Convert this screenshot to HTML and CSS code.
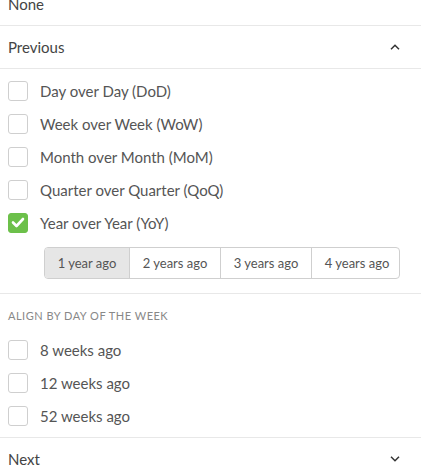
FILE: index.html
```html
<!DOCTYPE html>
<html>
<head>
<meta charset="utf-8">
<link rel="stylesheet" href="styles.css">
</head>
<body>
<div class="panel">
  <div class="header">None</div>
  <div class="header">
    <span>Previous</span>
    <svg class="chev" width="10" height="6" viewBox="0 0 10 6"><path d="M1 5.2 L5 1.2 L9 5.2" fill="none" stroke="#333" stroke-width="1.5"/></svg>
  </div>
  <div class="section first">
    <label class="row"><span class="box"></span>Day over Day (DoD)</label>
    <label class="row"><span class="box"></span>Week over Week (WoW)</label>
    <label class="row"><span class="box"></span>Month over Month (MoM)</label>
    <label class="row"><span class="box"></span>Quarter over Quarter (QoQ)</label>
    <label class="row"><span class="box checked"><svg width="14" height="11" viewBox="0 0 14 11"><path d="M2 5.5 L5.5 9 L12 2" fill="none" stroke="#fff" stroke-width="2.6" stroke-linecap="round" stroke-linejoin="round"/></svg></span>Year over Year (YoY)</label>
    <div class="seg">
      <span class="btn active">1 year ago</span>
      <span class="btn">2 years ago</span>
      <span class="btn">3 years ago</span>
      <span class="btn">4 years ago</span>
    </div>
  </div>
  <div class="section second">
    <div class="caption">ALIGN BY DAY OF THE WEEK</div>
    <label class="row"><span class="box"></span>8 weeks ago</label>
    <label class="row"><span class="box"></span>12 weeks ago</label>
    <label class="row"><span class="box"></span>52 weeks ago</label>
  </div>
  <div class="header">
    <span>Next</span>
    <svg class="chev" width="10" height="6" viewBox="0 0 10 6"><path d="M1 0.8 L5 4.8 L9 0.8" fill="none" stroke="#333" stroke-width="1.5"/></svg>
  </div>
</div>
</body>
</html>
```
FILE: styles.css
```css
html, body {
  margin: 0;
  padding: 0;
  background: #fff;
  overflow: hidden;
}
body {
  font-family: Lato, "Open Sans", sans-serif;
  font-size: 15px;
  color: #555;
}
.panel {
  margin-top: -17px;
  width: 421px;
}
.header {
  height: 42px;
  border-bottom: 1px solid #e8e8e8;
  display: flex;
  align-items: center;
  justify-content: space-between;
  padding: 0 21px 0 8px;
  color: #444;
}
.chev {
  display: block;
}
.section {
  border-bottom: 1px solid #e8e8e8;
}
.section.first {
  padding: 5px 0 14px;
}
.section.second {
  padding: 12px 0 5px;
}
.row {
  height: 33px;
  display: flex;
  align-items: center;
  padding-left: 8px;
  gap: 12px;
}
.box {
  width: 18px;
  height: 18px;
  border: 1px solid #cfcfcf;
  border-radius: 3px;
  box-sizing: content-box;
  display: flex;
  align-items: center;
  justify-content: center;
  flex: none;
}
.box.checked {
  background: #6cc04a;
  border-color: #6cc04a;
}
.seg {
  display: flex;
  margin: 8px 0 0 44px;
  width: 356px;
  height: 32px;
  border: 1px solid #cfcfcf;
  border-radius: 4px;
  box-sizing: border-box;
  overflow: hidden;
}
.btn {
  flex: none;
  display: flex;
  align-items: center;
  justify-content: center;
  font-size: 13px;
  color: #555;
  border-left: 1px solid #cfcfcf;
}
.btn:nth-child(1) { width: 84px; border-left: none; background: #e6e6e6; }
.btn:nth-child(2) { width: 90px; }
.btn:nth-child(3) { width: 90px; }
.btn:nth-child(4) { width: 90px; }
.caption {
  font-size: 11px;
  letter-spacing: 0.5px;
  color: #888;
  padding-left: 8px;
  height: 20px;
  line-height: 20px;
  margin-bottom: 7px;
}
```
